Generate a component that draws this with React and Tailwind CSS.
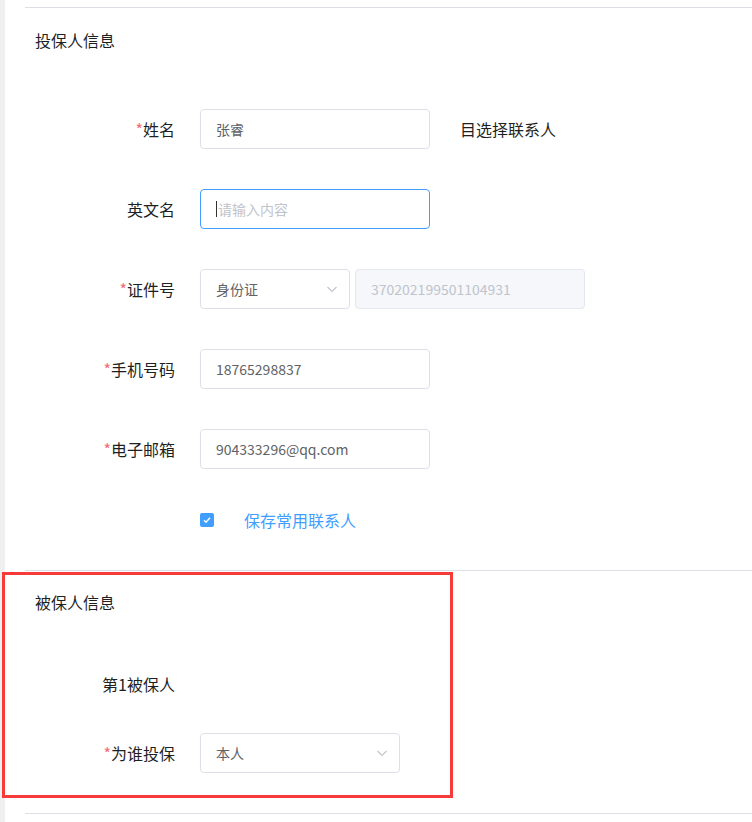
import React from 'react';

const font = { fontFamily: '"Microsoft YaHei", "Noto Sans CJK SC", "Noto Sans", sans-serif' };

const Chevron = () => (
    <svg width="12" height="12" viewBox="0 0 12 12" fill="none" stroke="#c0c4cc" strokeWidth="1.1">
        <path d="M1.5 4l4.5 4.5L10.5 4" />
    </svg>
);

const Row = ({ label, required, children, className = '' }) => (
    <div className={`flex items-center h-10 ${className}`}>
        <div className="w-[150px] text-right text-[16px] text-[#1f1f1f] leading-none">
            {required && <span className="text-[#f56c6c]">*</span>}
            {label}
        </div>
        <div className="ml-[25px] flex items-center">{children}</div>
    </div>
);

const Input = ({ value, width = 'w-[230px]' }) => (
    <div className={`${width} h-10 border border-[#dcdfe6] rounded-[4px] px-[15px] flex items-center text-[14px] text-[#606266] bg-white`}>
        {value}
    </div>
);

const Select = ({ value, width }) => (
    <div className={`${width} h-10 border border-[#dcdfe6] rounded-[4px] pl-[15px] pr-[11px] flex items-center justify-between text-[14px] text-[#606266] bg-white`}>
        <span>{value}</span>
        <Chevron />
    </div>
);

const App = () => {
    return (
        <div className="relative w-[752px] h-[822px] bg-white flex overflow-hidden" style={font}>
            {/* left strip */}
            <div className="w-[5px] h-full bg-[#efefef] shrink-0" />

            <div className="flex-1 pl-5 pt-[7px]">
                {/* 投保人信息 */}
                <div className="border-t border-[#dcdfe6] pt-5">
                    <div className="pl-[10px] h-6 flex items-center text-[16px] text-[#1f1f1f]">投保人信息</div>

                    <div className="mt-[57px] flex flex-col gap-10">
                        <Row label="姓名" required>
                            <Input value="张睿" />
                            <span className="ml-[30px] text-[16px] text-[#1f1f1f]">目选择联系人</span>
                        </Row>
                        <Row label="英文名">
                            <div className="w-[230px] h-10 border border-[#409eff] rounded-[4px] pl-[15px] flex items-center text-[14px] text-[#c0c4cc]">
                                <span className="w-px h-4 bg-[#333] mr-px" />
                                请输入内容
                            </div>
                        </Row>
                        <Row label="证件号" required>
                            <Select value="身份证" width="w-[150px]" />
                            <div className="ml-[5px] w-[230px] h-10 border border-[#e4e7ed] bg-[#f5f7fa] rounded-[4px] px-[15px] flex items-center text-[14px] text-[#c0c4cc]">
                                370202199501104931
                            </div>
                        </Row>
                        <Row label="手机号码" required>
                            <Input value="18765298837" />
                        </Row>
                        <Row label="电子邮箱" required>
                            <Input value="904333296@qq.com" />
                        </Row>
                        <Row label="" className="-mt-[9px]">
                            <span className="w-[14px] h-[14px] rounded-[2px] bg-[#409eff] flex items-center justify-center">
                                <svg width="10" height="10" viewBox="0 0 10 10" fill="none" stroke="white" strokeWidth="1.4">
                                    <path d="M2 5.2l2 2 4-4.4" />
                                </svg>
                            </span>
                            <span className="ml-[30px] text-[16px] text-[#409eff]">保存常用联系人</span>
                        </Row>
                    </div>
                </div>

                {/* 被保人信息 */}
                <div className="mt-[30px] border-t border-[#dcdfe6] pt-[19px]">
                    <div className="pl-[10px] h-6 flex items-center text-[16px] text-[#1f1f1f]">被保人信息</div>
                    <div className="mt-[50px] flex flex-col gap-[29px]">
                        <Row label="第1被保人" />
                        <Row label="为谁投保" required>
                            <Select value="本人" width="w-[200px]" />
                        </Row>
                    </div>
                </div>

                <div className="mt-10 border-t border-[#dcdfe6]" />
            </div>

            {/* annotation box */}
            <div className="absolute left-[2px] top-[572px] w-[451px] h-[226px] border-[3px] border-[#f73b3b]" />
        </div>
    );
};

export default App;
